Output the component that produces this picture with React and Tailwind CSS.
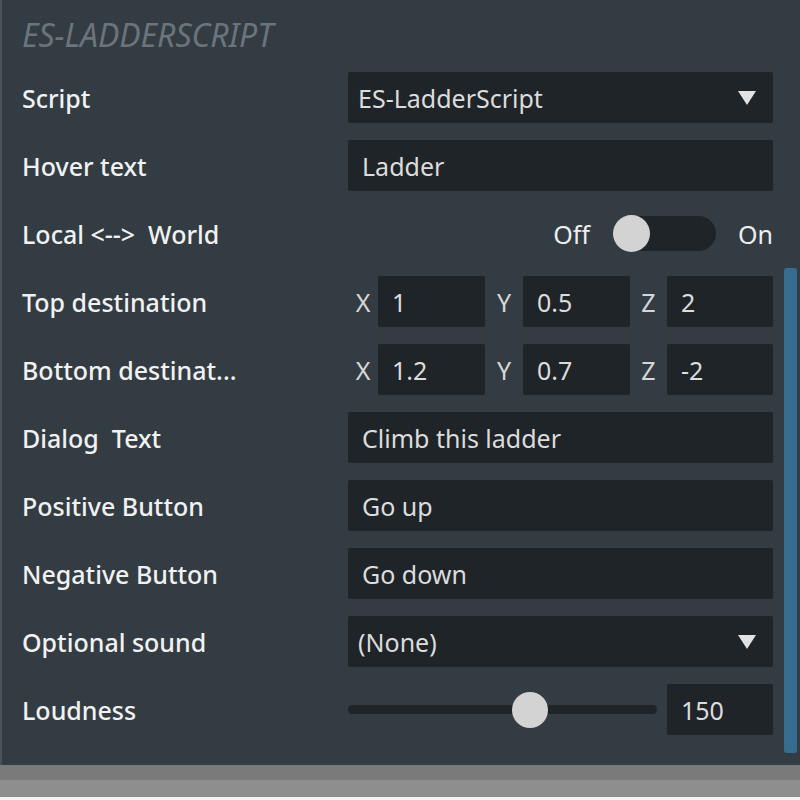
import React from "react";

const Tri = () => (
  <svg width="20" height="16" viewBox="0 0 20 16" className="shrink-0">
    <polygon points="1,1 19,1 10,15" fill="#e2e2e2" />
  </svg>
);

const Label = ({ children }) => (
  <div className="w-[346px] shrink-0 pl-[20px] pt-[3px] text-[25px] font-medium text-[#f1f1f1] whitespace-pre">{children}</div>
);

const Input = ({ value, className = "" }) => (
  <div className={`h-[51px] bg-[#1f2428] rounded-[2px] flex items-center pl-[14px] pt-[3px] text-[25px] text-[#dcdcdc] ${className}`}>
    {value}
  </div>
);

const Select = ({ value }) => (
  <div className="h-[51px] w-[425px] bg-[#1f2428] rounded-[2px] flex items-center justify-between pl-[10px] pr-[16px] text-[25px] text-[#dcdcdc]">
    <span className="pt-[3px]">{value}</span>
    <Tri />
  </div>
);

const Row = ({ label, children }) => (
  <div className="h-[51px] flex items-center">
    <Label>{label}</Label>
    <div className="w-[425px] h-[51px] flex items-center">{children}</div>
  </div>
);

const XYZ = ({ x, y, z }) => (
  <div className="flex items-center w-[425px] text-[25px] text-[#d6d6d6]">
    <span className="w-[30px] text-center pt-[3px]">X</span>
    <Input value={x} className="w-[107px]" />
    <span className="w-[38px] text-center pt-[3px]">Y</span>
    <Input value={y} className="w-[107px]" />
    <span className="w-[37px] text-center pt-[3px]">Z</span>
    <Input value={z} className="w-[106px]" />
  </div>
);

export default function App() {
  return (
    <div
      className="w-[800px] h-[800px] flex flex-col bg-[#8d8d8d] overflow-hidden"
      style={{ fontFamily: '"Noto Sans", sans-serif' }}
    >
      <div className="h-[765px] bg-[#333c43] border-l-[2px] border-[#4a5358] flex">
        <div className="flex-1 flex flex-col">
          <div className="h-[72px] flex items-center pl-[20px] pb-[2px]">
            <span className="italic text-[32px] text-[#6b747a]">ES-LADDERSCRIPT</span>
          </div>
          <div className="flex flex-col gap-[17px]">
            <Row label="Script"><Select value="ES-LadderScript" /></Row>
            <Row label="Hover text"><Input value="Ladder" className="w-[425px]" /></Row>
            <Row label="Local <-->  World">
              <div className="w-full flex items-center justify-end text-[25px] text-[#eeeeee]">
                <span className="pt-[3px]">Off</span>
                <div className="ml-[25px] w-[101px] h-[35px] rounded-full bg-[#1f2428] flex items-center">
                  <div className="w-[37px] h-[37px] rounded-full bg-[#d3d3d3] -ml-[2px]" />
                </div>
                <span className="ml-[22px] pt-[3px]">On</span>
              </div>
            </Row>
            <Row label="Top destination"><XYZ x="1" y="0.5" z="2" /></Row>
            <Row label="Bottom destinat..."><XYZ x="1.2" y="0.7" z="-2" /></Row>
            <Row label="Dialog  Text"><Input value="Climb this ladder" className="w-[425px]" /></Row>
            <Row label="Positive Button"><Input value="Go up" className="w-[425px]" /></Row>
            <Row label="Negative Button"><Input value="Go down" className="w-[425px]" /></Row>
            <Row label="Optional sound"><Select value="(None)" /></Row>
            <Row label="Loudness">
              <div className="flex items-center w-[425px]">
                <div className="w-[309px] h-[9px] rounded-full bg-[#1f2428] flex items-center">
                  <div className="w-[36px] h-[36px] rounded-full bg-[#d3d3d3] ml-[164px]" />
                </div>
                <Input value="150" className="ml-[10px] w-[106px] pl-[13px]" />
              </div>
            </Row>
          </div>
        </div>
        <div className="w-[13px] mt-[268px] h-[485px] rounded-[3px] bg-[#356d8e] mr-[3px] ml-[11px]" />
      </div>
      <div className="h-[15px] bg-[#7a7a7a]" />
      <div className="h-[17px] bg-[#8e8e8e]" />
      <div className="h-[3px] bg-[#f4f4f4]" />
    </div>
  );
}
